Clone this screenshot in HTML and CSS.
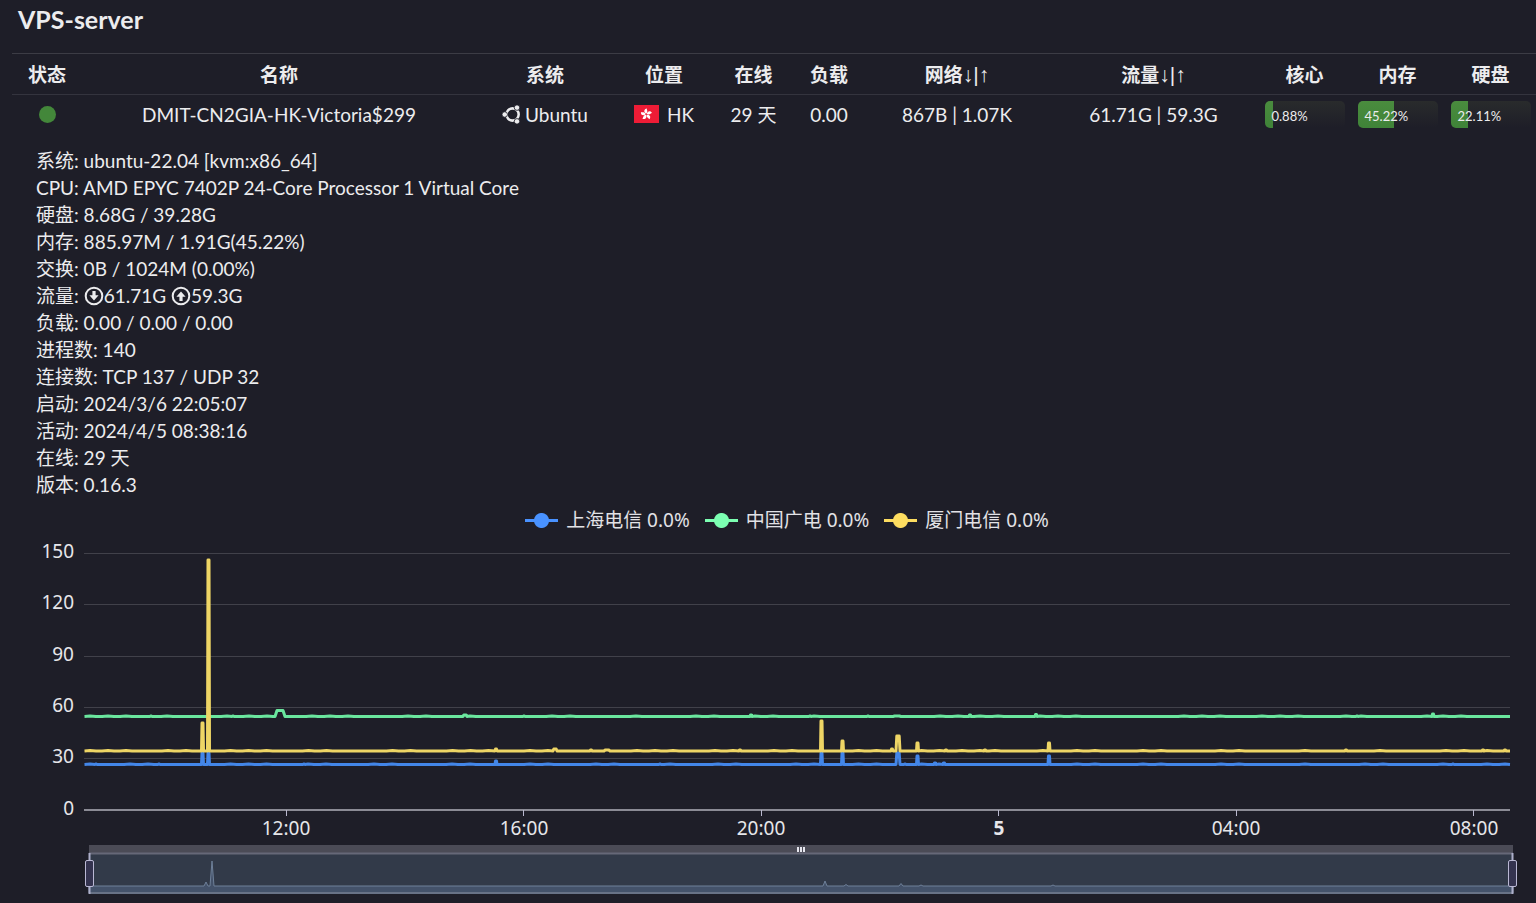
FILE: index.html
```html
<!DOCTYPE html>
<html lang="zh-CN">
<head>
<meta charset="utf-8">
<meta name="viewport" content="width=device-width, initial-scale=1">
<title>VPS-server</title>
<link rel="stylesheet" href="styles.css">
</head>
<body>
<main class="page">
  <h1 class="title">VPS-server</h1>

  <table class="servers">
    <colgroup>
      <col class="c-status"><col class="c-name"><col class="c-system"><col class="c-place"><col class="c-online"><col class="c-load">
      <col class="c-net"><col class="c-traffic"><col class="c-bar"><col class="c-bar"><col class="c-bar">
    </colgroup>
    <thead>
      <tr>
        <th>状态</th><th>名称</th><th>系统</th><th>位置</th><th>在线</th><th>负载</th>
        <th>网络<span class="arrows">↓|↑</span></th><th>流量<span class="arrows">↓|↑</span></th>
        <th>核心</th><th>内存</th><th>硬盘</th>
      </tr>
    </thead>
    <tbody>
      <tr>
        <td><span class="dot" role="img" aria-label="在线"></span></td>
        <td>DMIT-CN2GIA-HK-Victoria$299</td>
        <td>
          <span class="with-icon">
            <svg class="ubuntu" viewBox="0 0 18 18" aria-hidden="true">
              <circle cx="10" cy="9" r="5.8" fill="none" stroke="currentColor" stroke-width="2.4"/>
              <g fill="currentColor" stroke="#1e1e28" stroke-width="0.8">
                <circle cx="2.6" cy="9" r="2.6"/><circle cx="14.2" cy="2.5" r="2.6"/><circle cx="14.2" cy="15.5" r="2.6"/>
              </g>
            </svg>Ubuntu
          </span>
        </td>
        <td>
          <span class="with-icon place">
            <svg class="flag" viewBox="0 0 25 18" aria-hidden="true">
              <rect width="25" height="18" fill="#ee1c36"/>
              <g fill="#fff" transform="translate(12.3 9.3)">
                <path id="petal" d="M0-.6C-3-2-2.4-5.4.6-5.8C0-4.6 2.3-3.2 0-.6Z"/>
                <use href="#petal" transform="rotate(72)"/><use href="#petal" transform="rotate(144)"/>
                <use href="#petal" transform="rotate(216)"/><use href="#petal" transform="rotate(288)"/>
              </g>
            </svg>HK
          </span>
        </td>
        <td>29 天</td>
        <td>0.00</td>
        <td>867B | 1.07K</td>
        <td>61.71G | 59.3G</td>
        <td><div class="bar" role="progressbar" aria-label="核心" aria-valuenow="0.88"><div class="fill" style="width:0.88%"></div><span class="pct">0.88%</span></div></td>
        <td><div class="bar" role="progressbar" aria-label="内存" aria-valuenow="45.22"><div class="fill" style="width:45.22%"></div><span class="pct">45.22%</span></div></td>
        <td><div class="bar" role="progressbar" aria-label="硬盘" aria-valuenow="22.11"><div class="fill" style="width:22.11%"></div><span class="pct">22.11%</span></div></td>
      </tr>
    </tbody>
  </table>

  <ul class="details">
    <li>系统: ubuntu-22.04 [kvm:x86_64]</li>
    <li>CPU: AMD EPYC 7402P 24-Core Processor 1 Virtual Core</li>
    <li>硬盘: 8.68G / 39.28G</li>
    <li>内存: 885.97M / 1.91G(45.22%)</li>
    <li>交换: 0B / 1024M (0.00%)</li>
    <li>流量: <svg class="circ" viewBox="0 0 20 20" aria-hidden="true"><circle cx="10" cy="10" r="8.3"/><path d="M8.4 5h3.2v4.3h3L10 14.6 5.4 9.3h3z"/></svg>61.71G <svg class="circ" viewBox="0 0 20 20" aria-hidden="true"><circle cx="10" cy="10" r="8.3"/><path d="M8.4 15h3.2v-4.3h3L10 5.4 5.4 10.7h3z"/></svg>59.3G</li>
    <li>负载: 0.00 / 0.00 / 0.00</li>
    <li>进程数: 140</li>
    <li>连接数: TCP 137 / UDP 32</li>
    <li>启动: 2024/3/6 22:05:07</li>
    <li>活动: 2024/4/5 08:38:16</li>
    <li>在线: 29 天</li>
    <li>版本: 0.16.3</li>
  </ul>

  <section class="chart" aria-label="延迟">
    <div class="legend">
      <button type="button" class="key blue"><span class="mark"></span>上海电信 0.0%</button>
      <button type="button" class="key green"><span class="mark"></span>中国广电 0.0%</button>
      <button type="button" class="key yellow"><span class="mark"></span>厦门电信 0.0%</button>
    </div>
    <svg class="plot" viewBox="0 536 1536 309">
      <g class="grid">
        <path d="M84 553.5H1510M84 604.5H1510M84 656.5H1510M84 707.5H1510M84 758.5H1510"/>
      </g>
      <path class="axis" d="M84 810H1510"/>
      <path class="ticks" d="M286.5 810v6M523.5 810v6M761.5 810v6M998.5 810v6M1236.5 810v6M1473.5 810v6"/>
      <g class="ylab">
        <text x="74" y="558">150</text><text x="74" y="609">120</text><text x="74" y="661">90</text>
        <text x="74" y="712">60</text><text x="74" y="763">30</text><text x="74" y="815">0</text>
      </g>
      <g class="xlab">
        <text x="286" y="835">12:00</text><text x="524" y="835">16:00</text><text x="761" y="835">20:00</text>
        <text class="day" x="999" y="835">5</text><text x="1236" y="835">04:00</text><text x="1474" y="835">08:00</text>
      </g>
      <path id="blue" class="line line-blue"/>
      <path id="green" class="line line-green"/>
      <path id="yellow" class="line line-yellow"/>
    </svg>
    <div class="zoom">
      <svg class="zoom-bg" viewBox="85 845 1432 50" preserveAspectRatio="none" aria-hidden="true">
        <rect x="89" y="845" width="1424" height="8" fill="#4b4b56"/>
        <rect x="89" y="853" width="1424" height="40" fill="#323a49"/>
        <path id="overview" fill="#44526a" stroke="#6e8099"/>
        <path d="M89 853.5H1513" stroke="#666878" stroke-width="2"/>
        <path d="M89 893H1513" stroke="#687286" stroke-width="2"/>
        <path d="M89.5 853V894M1512.5 853V894" stroke="#aeb0cb" stroke-width="2"/>
        <path d="M798 847v5M801 847v5M804 847v5" stroke="#e6e6ee" stroke-width="2"/>
      </svg>
      <input class="range" type="range" min="0" max="100" value="0" aria-label="起点">
      <input class="range" type="range" min="0" max="100" value="100" aria-label="终点">
    </div>
  </section>
</main>
<script src="chart.js"></script>
</body>
</html>
```
FILE: styles.css
```css
* { box-sizing: border-box; }
body {
  margin: 0;
  background: #1e1e28;
  color: #ececee;
  font-family: Lato, "Noto Sans CJK SC", sans-serif;
  font-size: 19px;
  line-height: 27px;
}
.page { overflow: hidden; }
.title {
  margin: 0;
  padding: 4px 18px 18px;
  font-size: 25px;
  line-height: 31px;
  font-weight: 700;
}
.servers {
  width: calc(100% - 12px);
  margin-left: 12px;
  border-collapse: collapse;
  table-layout: fixed;
  text-align: center;
  white-space: nowrap;
}
.servers th, .servers td { padding: 0; vertical-align: middle; }
.servers th {
  height: 41px;
  border-top: 1px solid #3c3c45;
  border-bottom: 1px solid #34343e;
  font-weight: 700;
}
.servers td { height: 39px; }
.c-status { width: 70px; }
.c-name { width: 394px; }
.c-system { width: 138px; }
.c-place { width: 100px; }
.c-online { width: 79px; }
.c-load { width: 72px; }
.c-net { width: 184px; }
.c-traffic { width: 209px; }
.c-bar { width: 93px; }
.arrows { font-family: "DejaVu Sans Condensed", "Liberation Sans", sans-serif; font-weight: 400; font-family: "Liberation Sans", sans-serif; font-size: 21px; line-height: 20px; }
.dot {
  display: block;
  width: 17px;
  height: 17px;
  margin: 0 auto;
  border-radius: 50%;
  background: #43873a;
}
.with-icon { display: flex; align-items: center; justify-content: center; gap: 4px; }
.place { gap: 8px; }
.ubuntu { width: 19px; height: 19px; }
.flag { width: 25px; height: 18px; }
.bar {
  position: relative;
  width: 80px;
  height: 27px;
  margin: 0 auto;
  overflow: hidden;
  border-radius: 5px;
  background: linear-gradient(#292b2c, #1e1e28);
}
.fill { height: 100%; min-width: 8px; background: linear-gradient(#4a8c3e, #3f8338); }
.pct {
  position: absolute;
  left: 7px;
  top: 2px;
  font-size: 13px;
}
.details { margin: 0; padding: 13px 36px 0; list-style: none; }
.circ {
  width: 20px;
  height: 20px;
  vertical-align: -3px;
  fill: currentColor;
}
.circ circle { fill: none; stroke: currentColor; stroke-width: 2; }
.chart { font-family: "Noto Sans", "Noto Sans CJK SC", sans-serif; }
.legend {
  display: flex;
  justify-content: center;
  gap: 15px;
  padding: 9px 0 2px;
  margin-left: 38px;
}
.key {
  display: flex;
  align-items: center;
  gap: 8px;
  padding: 0;
  border: 0;
  background: none;
  color: #e2e2e6;
  font: inherit;
}
.mark {
  width: 33px;
  height: 15px;
  background:
    radial-gradient(circle, currentColor 7px, transparent 8px),
    linear-gradient(currentColor, currentColor) center / 100% 3px no-repeat;
}
.blue .mark { color: #4992ff; }
.green .mark { color: #7cffb2; }
.yellow .mark { color: #fddd60; }
.plot { display: block; width: 100%; height: auto; }
.grid path { stroke: #41414a; }
.axis { stroke: #8b8b95; stroke-width: 2; }
.ticks { stroke: #b9b8ce; }
.plot text { fill: #e6e6ea; font-size: 19px; }
.ylab { text-anchor: end; }
.xlab { text-anchor: middle; }
.plot .day { font-weight: 700; }
.line { fill: none; stroke-width: 3; stroke-linejoin: round; }
.line-blue { stroke: #4386e8; }
.line-green { stroke: #6ae69e; }
.line-yellow { stroke: #eed565; }
.zoom { position: relative; height: 50px; margin: 0 19px 0 85px; }
.zoom-bg { display: block; width: 100%; height: 50px; }
.range {
  position: absolute;
  left: 0;
  top: 15px;
  width: 100%;
  height: 28px;
  margin: 0;
  appearance: none;
  background: none;
  pointer-events: none;
}
.range::-webkit-slider-thumb {
  appearance: none;
  width: 9px;
  height: 27px;
  border: 1px solid #bab8d4;
  border-radius: 2px;
  background: #34334f;
  pointer-events: auto;
}
```
FILE: chart.js
```js
// Each spike: [x centre, y of the top, half width at the base]
const series = {
  green: { base: 716.5, spikes: [[151, 716, 1], [233, 716, 1], [280, 710.5, 5], [465, 715, 2], [524, 716, 1], [751, 715, 1], [810, 716, 1], [868, 716, 1], [897, 716, 4], [970, 715, 1], [1036, 714.5, 1], [1357, 716, 1], [1433, 714, 1]] },
  yellow: { base: 751, spikes: [[202.5, 723, 1], [208.5, 560, 1], [496, 749, 1], [555, 749, 2], [591, 750, 1], [607, 750, 3], [740, 750, 1], [821.5, 721, 1], [842.5, 741, 1], [892, 749, 1], [898, 736, 2], [917.5, 743, 1], [946, 750, 1], [985, 750, 1], [1049, 743, 1], [1346, 750, 1], [1483, 750, 1], [1505, 750, 1]] },
  blue: { base: 764.5, spikes: [[96, 764, 1], [159, 764, 1], [202.5, 753, 1], [208.5, 753, 1], [304, 764, 1], [496, 761, 1], [660, 764, 1], [821.5, 753, 1], [842.5, 753, 1], [898, 753, 2], [905, 764, 1], [917.5, 756, 1], [935, 763, 1], [944, 763, 1], [1049, 756, 1], [1453, 764, 1]] }
};

for (const [id, { base, spikes }] of Object.entries(series)) {
  const parts = [`M84.5 ${base}`];
  let next = 90;
  const ripple = (until) => {
    for (; next < until; next += 6) {
      const wave = Math.sin(next * 1.7) + Math.sin(next * 0.31);
      parts.push(`L${next} ${(base - (wave > 1.1 ? 0.4 : 0)).toFixed(1)}`);
    }
  };
  for (const [x, top, half] of spikes) {
    ripple(x - half - 1);
    const flat = half > 1 ? half * 0.6 : 0.5;
    parts.push(`L${x - half} ${base}L${x - flat} ${top}L${x + flat} ${top}L${x + half} ${base}`);
    next = Math.max(next, x + half + 3);
  }
  ripple(1508);
  parts.push(`L1510 ${base}`);
  document.getElementById(id).setAttribute("d", parts.join(""));
}

const peaks = [[206, 882], [212, 861], [825, 881], [846, 884.5], [901, 883.5], [921, 885], [1053, 885]];
const outline = peaks.map(([x, y]) => `L${x - 2} 886L${x} ${y}L${x + 2} 886`).join("");
document.getElementById("overview").setAttribute("d", `M89 893V886${outline}L1513 886V893Z`);
```
